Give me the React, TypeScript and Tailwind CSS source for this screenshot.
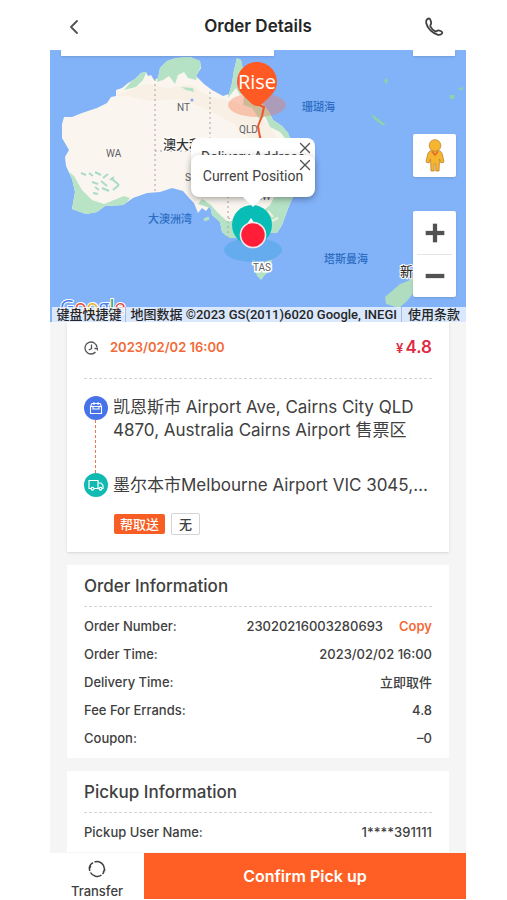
import type { ReactNode } from "react";
import { ChevronLeft, Minus, Plus, X } from "lucide-react";

const orderRows = [
  { label: "Order Number:", value: "23020216003280693", copy: true },
  { label: "Order Time:", value: "2023/02/02 16:00" },
  { label: "Delivery Time:", value: "立即取件" },
  { label: "Fee For Errands:", value: "4.8" },
  { label: "Coupon:", value: "–0" },
];

const pickupRows = [{ label: "Pickup User Name:", value: "1****391111" }];

function MapDrawing() {
  return (
    <svg
      viewBox="50 50 416 272"
      preserveAspectRatio="xMidYMid slice"
      className="absolute inset-0 h-full w-full"
      aria-hidden="true"
    >
      <defs>
        <clipPath id="mainland">
          <path d="M62 124L64 117 72 117 82 113 97 108 107 103 111 97 116 96 116 90 122 88 128 83 135 79 141 73 146 72 148 76 151 75 154 80 158 78 160 68 167 61 176 58 190 57 200 61 201 68 196 76 204 84 212 90 223 96 229 94 232 83 234 70 237 58 241 60 243 70 249 77 253 90 262 103 269 112 273 120 282 126 288 133 293 146 299 165 297 188 289 206 282 225 277 233 268 233 258 240 246 241 238 238 229 238 222 232 220 222 212 215 210 206 206 211 202 208 198 213 194 203 189 198 183 191 172 188 160 192 147 193 133 198 123 205 105 206 97 212 86 214 72 209 75 192 72 179 66 166 65 157 69 150 62 138Z" />
        </clipPath>
      </defs>
      <rect x="50" y="50" width="416" height="272" fill="#82b2f8" />
      <g clipPath="url(#mainland)">
        <rect x="50" y="50" width="260" height="200" fill="#faf6ef" />
        <path
          d="M116 96L145 84 170 88 190 84 210 97 235 102 260 112 280 142 260 150 234 124 205 108 180 99 150 101 130 96Z"
          fill="#f8f0e5"
        />
        <path
          d="M124 90L141 70 147 71 143 80 136 87Z M157 82L160 50 212 50 200 68 196 80 188 78 184 72 178 75 175 84 169 76 163 80Z M181 87L193 88 194 92 186 90Z M228 98L233 50 250 54 246 90 240 95 236 88Z M246 76L278 114 300 148 288 142 280 132 270 127 265 116 260 120 252 108 243 105Z"
          fill="#b5e2c4"
        />
        <path d="M62 166L74 176 82 190 92 200 104 204 124 196 130 198 121 210 100 218 62 218Z" fill="#b9e3c5" />
        <path
          d="M81 173l5 2m3-2 4 3m2-4 6 3m2 3 5-4m2 6 4-3m-22 5 6 2m3-3 6 5m4-8 8 7m-17 3 7 3m-14-4 4 3m14 0 6-5m-26 8 5 1"
          fill="none"
          stroke="#aadbc6"
          strokeWidth="2"
        />
        <path
          d="M280 180L304 180 288 240 220 244 210 208 198 204 202 199 211 205 218 213 228 222 238 219 246 224 258 215 270 205 276 194Z"
          fill="#b5e2c4"
        />
        <path d="M268 211l5 6m-1 4 6-3" stroke="#eef0dc" strokeWidth="2" />
      </g>
      <path
        d="M155 79V193M155 151H210M210 92V151M228 151V238M228 218L255 226"
        fill="none"
        stroke="#a9a0a3"
        strokeDasharray="2 3"
      />
      <path d="M203 201l4 4m-3 15 5-2" stroke="#b5e2c4" strokeWidth="3" />
      <circle cx="192" cy="100" r="1.5" fill="#82a5f3" />
      <path
        d="M252 259L260 263 272 260 270 270 265 275 261 280 257 276 254 268Z"
        fill="#b5e2c4"
      />
      <path
        d="M414 277L414 292 407 301 399 308 386 304 385 297 392 291 400 284 408 281Z"
        fill="#b0dcc0"
      />
      <path
        d="M371 114L376 117 386 125 382 125 374 119Z M450 95L455 95 454 99 450 99Z M457 89L463 87 463 90Z M384 80l3-2 1 4-2 2Z"
        fill="#8bd3a9"
      />
      <g fontFamily="Roboto, sans-serif" fontSize="10" fill="#5f6066">
        <text x="106" y="157">WA</text>
        <text x="177" y="111">NT</text>
        <text x="239" y="133">QLD</text>
        <text x="185" y="181">SA</text>
        <text x="249" y="200">NSW</text>
        <text x="253" y="271" stroke="#fff" strokeWidth="3" paintOrder="stroke">
          TAS
        </text>
      </g>
      <g fontFamily="Inter, 'Noto Sans CJK SC', sans-serif" fontSize="11" fontWeight="500" fill="#2b6dc2">
        <text x="302" y="111">珊瑚海</text>
        <text x="148" y="223">大澳洲湾</text>
        <text x="324" y="263">塔斯曼海</text>
      </g>
      <g
        fontFamily="Inter, 'Noto Sans CJK SC', sans-serif"
        fontWeight="500"
        fill="#333"
        stroke="#fff"
        strokeWidth="2"
        paintOrder="stroke"
      >
        <text x="163" y="149" fontSize="13">澳大利亚</text>
        <text x="400" y="276" fontSize="13">新西兰</text>
      </g>

      <ellipse cx="257" cy="105" rx="29" ry="12" fill="#fa744b" opacity=".36" />
      <path d="M257 104L264 107 262 116 258 126 259 132 261 142" fill="none" stroke="#ee5529" strokeWidth="2" />
      <path
        d="M257 62C268 62 277 71 277 82C277 92 269 97 262 104Q257 108 252 104C245 97 237 92 237 82C237 71 246 62 257 62Z"
        fill="#ff5a23"
      />
      <text
        x="257"
        y="89"
        textAnchor="middle"
        fontFamily="'Open Sans', sans-serif"
        fontSize="20"
        fill="#fff"
      >
        Rise
      </text>
      <ellipse cx="253" cy="250" rx="29" ry="12" fill="#4da8e4" opacity=".55" />
      <circle cx="252" cy="225" r="20" fill="#08bdb5" />
      <path d="M247 224l4-6 4 6" fill="#fff" />
      <circle cx="253" cy="235" r="12.5" fill="#ff1d37" stroke="#f2e4ea" strokeWidth="1.6" />
      <text
        x="60"
        y="314"
        fontFamily="'Open Sans', sans-serif"
        fontSize="20"
        fontWeight="500"
        stroke="#fff"
        strokeWidth="2"
        paintOrder="stroke"
      >
        <tspan fill="#4a80e8">G</tspan>
        <tspan fill="#df5045">o</tspan>
        <tspan fill="#eab530">o</tspan>
        <tspan fill="#4a80e8">g</tspan>
        <tspan fill="#3fa35b">l</tspan>
        <tspan fill="#df5045">e</tspan>
      </text>
    </svg>
  );
}

function Pegman() {
  return (
    <svg viewBox="0 0 20 34" className="h-[34px] w-5" aria-hidden="true">
      <g fill="#f5b52e" stroke="#bd8230" strokeWidth=".8">
        <path d="M5 12Q10 10 15 12Q17 13 17.500 16L19 23L16 24L14.500 20L14 32H10.800V25H9.200V32H6L5.500 20L4 24L1 23L2.500 16Q3 13 5 12Z" />
        <circle cx="10" cy="6.500" r="5.800" />
      </g>
      <path d="M7 12.500L10 16 13 12.500" fill="none" stroke="#e06a2a" strokeWidth="1.500" />
    </svg>
  );
}

function OrderMap() {
  return (
    <section
      aria-label="Map"
      className="relative h-[272px] shrink-0 overflow-hidden font-[Roboto,'Noto_Sans_CJK_SC',sans-serif]"
    >
      <MapDrawing />
      <div className="absolute top-0 left-[11px] h-1.5 w-[213px] bg-white shadow" />
      <div className="absolute top-0 right-[11px] h-1.5 w-[42px] bg-white shadow" />

      <div className="absolute top-[88px] left-[141px] h-14 w-[124px] rounded-lg bg-white shadow-md">
        <p className="pt-[9px] text-center text-sm leading-5 text-neutral-700">Delivery Address</p>
        <button aria-label="Close delivery address" className="absolute top-px right-px text-neutral-600">
          <X className="size-[18px]" strokeWidth={1.8} />
        </button>
      </div>
      <div className="absolute top-[105px] left-[141px] w-[124px] rounded-lg bg-white py-[11px] shadow-[0_2px_7px_rgba(0,0,0,0.3)]">
        <p className="text-center text-sm leading-5 text-neutral-700">Current Position</p>
        <button aria-label="Close current position" className="absolute top-px right-px text-neutral-600">
          <X className="size-[18px]" strokeWidth={1.8} />
        </button>
        <svg viewBox="0 0 24 12" className="absolute top-full left-1/2 h-2.5 w-5 -translate-x-1/2" aria-hidden="true">
          <path d="M0 0H24L12 12Z" fill="#fff" />
        </svg>
      </div>

      <button
        aria-label="Street View"
        className="absolute top-[84px] right-2.5 flex h-[43px] w-[43px] items-center justify-center rounded-xs bg-white shadow"
      >
        <Pegman />
      </button>
      <div className="absolute top-[161px] right-2.5 flex w-[43px] flex-col rounded-xs bg-white text-neutral-600 shadow">
        <button aria-label="Zoom in" className="flex h-[43px] items-center justify-center">
          <Plus className="size-8" strokeWidth={3.2} strokeLinecap="butt" />
        </button>
        <div className="mx-1 h-px bg-neutral-200" />
        <button aria-label="Zoom out" className="flex h-[42px] items-center justify-center">
          <Minus className="size-8" strokeWidth={3.2} strokeLinecap="butt" />
        </button>
      </div>

      <div className="absolute right-0 bottom-0 flex h-[15px] items-center bg-white/70 text-[13px] leading-[15px] font-medium whitespace-nowrap text-neutral-800">
        <button className="px-1">键盘快捷键</button>
        <span className="border-x border-[#a9bcdf] px-1">地图数据 ©2023 GS(2011)6020 Google, INEGI</span>
        <a href="#terms" className="px-1.5">
          使用条款
        </a>
      </div>
    </section>
  );
}

function InfoCard({ title, rows }: { title: string; rows: { label: string; value: string; copy?: boolean }[] }) {
  return (
    <section className="bg-white px-[17px] pb-[5px]">
      <h2 className="pt-2 pb-[7px] text-[17px] leading-[26px] font-medium">{title}</h2>
      <Divider />
      <dl className="pt-1.5 text-[13px] font-medium">
        {rows.map((row) => (
          <div key={row.label} className="flex h-7 items-center justify-between">
            <dt>{row.label}</dt>
            <dd className="flex items-center gap-4">
              {row.value}
              {row.copy && <button className="font-semibold text-[#f56b39]">Copy</button>}
            </dd>
          </div>
        ))}
      </dl>
    </section>
  );
}

function Divider() {
  return <div className="border-t border-dashed border-neutral-300" />;
}

function Stop({ color, icon, children }: { color: string; icon: ReactNode; children: ReactNode }) {
  return (
    <div className="flex gap-[5px]">
      <span className={`flex size-6 shrink-0 items-center justify-center rounded-full text-white ${color}`}>
        {icon}
      </span>
      {children}
    </div>
  );
}

function SummaryCard() {
  return (
    <section className="bg-white px-[17px] pb-[17px] shadow-sm">
      <div className="flex h-14 items-center justify-between pb-1">
        <div className="flex items-center gap-3">
          <svg viewBox="0 0 14 14" className="size-3.5" fill="none" stroke="#555" strokeWidth="1.300" aria-hidden="true">
            <path d="M11.500 11A6 6 0 1 1 13 6.500M7.500 3.500V7.500L4.800 9" />
            <path d="M10.500 7.500H13.500V9.500" />
          </svg>
          <time className="text-[13px] font-semibold text-[#f26a38]">2023/02/02 16:00</time>
        </div>
        <p className="text-[17px] font-semibold text-[#e02a43]">
          <span className="mr-0.5 text-[13px]">¥</span>4.8
        </p>
      </div>
      <Divider />
      <div className="pt-[17px] text-[17px] leading-6">
        <Stop
          color="bg-[#4673e8]"
          icon={
            <svg viewBox="0 0 14 14" className="size-3.5" fill="none" stroke="currentColor" strokeWidth="1.100" aria-hidden="true">
              <path d="M1.500 5.500H12.500V12.500H1.500ZM1.500 5.500L3 2.500H11L12.500 5.500M4 5.500V8H10V5.500M5 1V4M9 1V4" />
            </svg>
          }
        >
          <p className="leading-[23px]">凯恩斯市 Airport Ave, Cairns City QLD 4870, Australia Cairns Airport 售票区</p>
        </Stop>
        <svg className="-mt-[22px] ml-[11px] h-[53px] w-px" aria-hidden="true">
          <line x1="0.5" y1="0" x2="0.5" y2="53" stroke="#ee754f" strokeDasharray="3 2" />
        </svg>
        <Stop
          color="bg-[#10bab0]"
          icon={
            <svg viewBox="0 0 16 14" className="h-3.5 w-4" fill="none" stroke="currentColor" strokeWidth="1.200" aria-hidden="true">
              <path d="M3 10.500H1V2.500H10V10.500H6M10 5H13L15 7.500V10.500H14M10 10.500H11" />
              <circle cx="4.500" cy="10.800" r="1.400" />
              <circle cx="12.500" cy="10.800" r="1.400" />
            </svg>
          }
        >
          <p className="min-w-0 truncate">墨尔本市Melbourne Airport VIC 3045, Australia</p>
        </Stop>
      </div>
      <div className="mt-4 ml-[30px] flex items-center gap-1.5 text-[13px] font-medium">
        <span className="rounded-xs bg-[#f85d24] px-1.5 leading-5 text-white">帮取送</span>
        <span className="rounded-xs border border-neutral-300 px-[7px] leading-5">无</span>
      </div>
    </section>
  );
}

export default function App() {
  return (
    <div className="h-screen bg-white pr-[41px] pb-px pl-[50px] font-[Inter,'Noto_Sans_CJK_SC',sans-serif] text-neutral-700">
      <div className="flex h-full flex-col">
        <header className="flex h-[50px] shrink-0 items-center justify-between px-3 pt-1">
          <button aria-label="Back" className="w-10 text-neutral-600">
            <ChevronLeft className="size-6" strokeWidth={1.8} />
          </button>
          <h1 className="text-[17px] font-semibold text-neutral-800">Order Details</h1>
          <button aria-label="Call" className="flex w-10 justify-center text-neutral-700">
            <svg viewBox="0 0 20 20" className="size-5" fill="none" stroke="currentColor" strokeWidth="1.800" strokeLinejoin="round" aria-hidden="true">
              <path d="M5 1.500C3 1.500 1.800 3.500 2.200 6C3.300 11.500 8.500 16.500 14 17.800C16.500 18.300 18.500 16.800 18.300 15.500C18 14.300 15.500 13.300 14.200 13.300C13 13.300 12.500 14.800 11.500 14.400C9.500 13.400 7 11 6.200 9C6 8 7.200 7.500 7.200 6.300C7.200 4.500 6.200 1.500 5 1.500Z" />
            </svg>
          </button>
        </header>

        <main className="flex min-h-0 flex-1 flex-col overflow-y-auto bg-neutral-100 [scrollbar-width:none]">
          <OrderMap />
          <div className="flex flex-col gap-[13px] px-[17px]">
            <SummaryCard />
            <InfoCard title="Order Information" rows={orderRows} />
            <InfoCard title="Pickup Information" rows={pickupRows} />
          </div>
        </main>

        <footer className="flex h-[46px] shrink-0">
          <button className="flex w-[94px] flex-col items-center justify-end gap-1.5 text-[13px] leading-[15px] font-medium">
            <svg viewBox="0 0 18 18" className="size-[18px]" fill="none" stroke="currentColor" strokeWidth="1.500" aria-hidden="true">
              <path d="M1.800 11A7.500 7.500 0 0 1 5 2.700M6.500 2A7.500 7.500 0 0 1 16.300 10.500M13.500 15A7.500 7.500 0 0 1 2.500 12.500" />
              <path d="M14.500 14A7.500 7.500 0 0 0 16 11.500M1 8.500L2.800 6M17 9.500L15.200 12" />
            </svg>
            Transfer
          </button>
          <button className="flex-1 bg-[#ff5f24] text-base font-semibold text-white">Confirm Pick up</button>
        </footer>
      </div>
    </div>
  );
}
